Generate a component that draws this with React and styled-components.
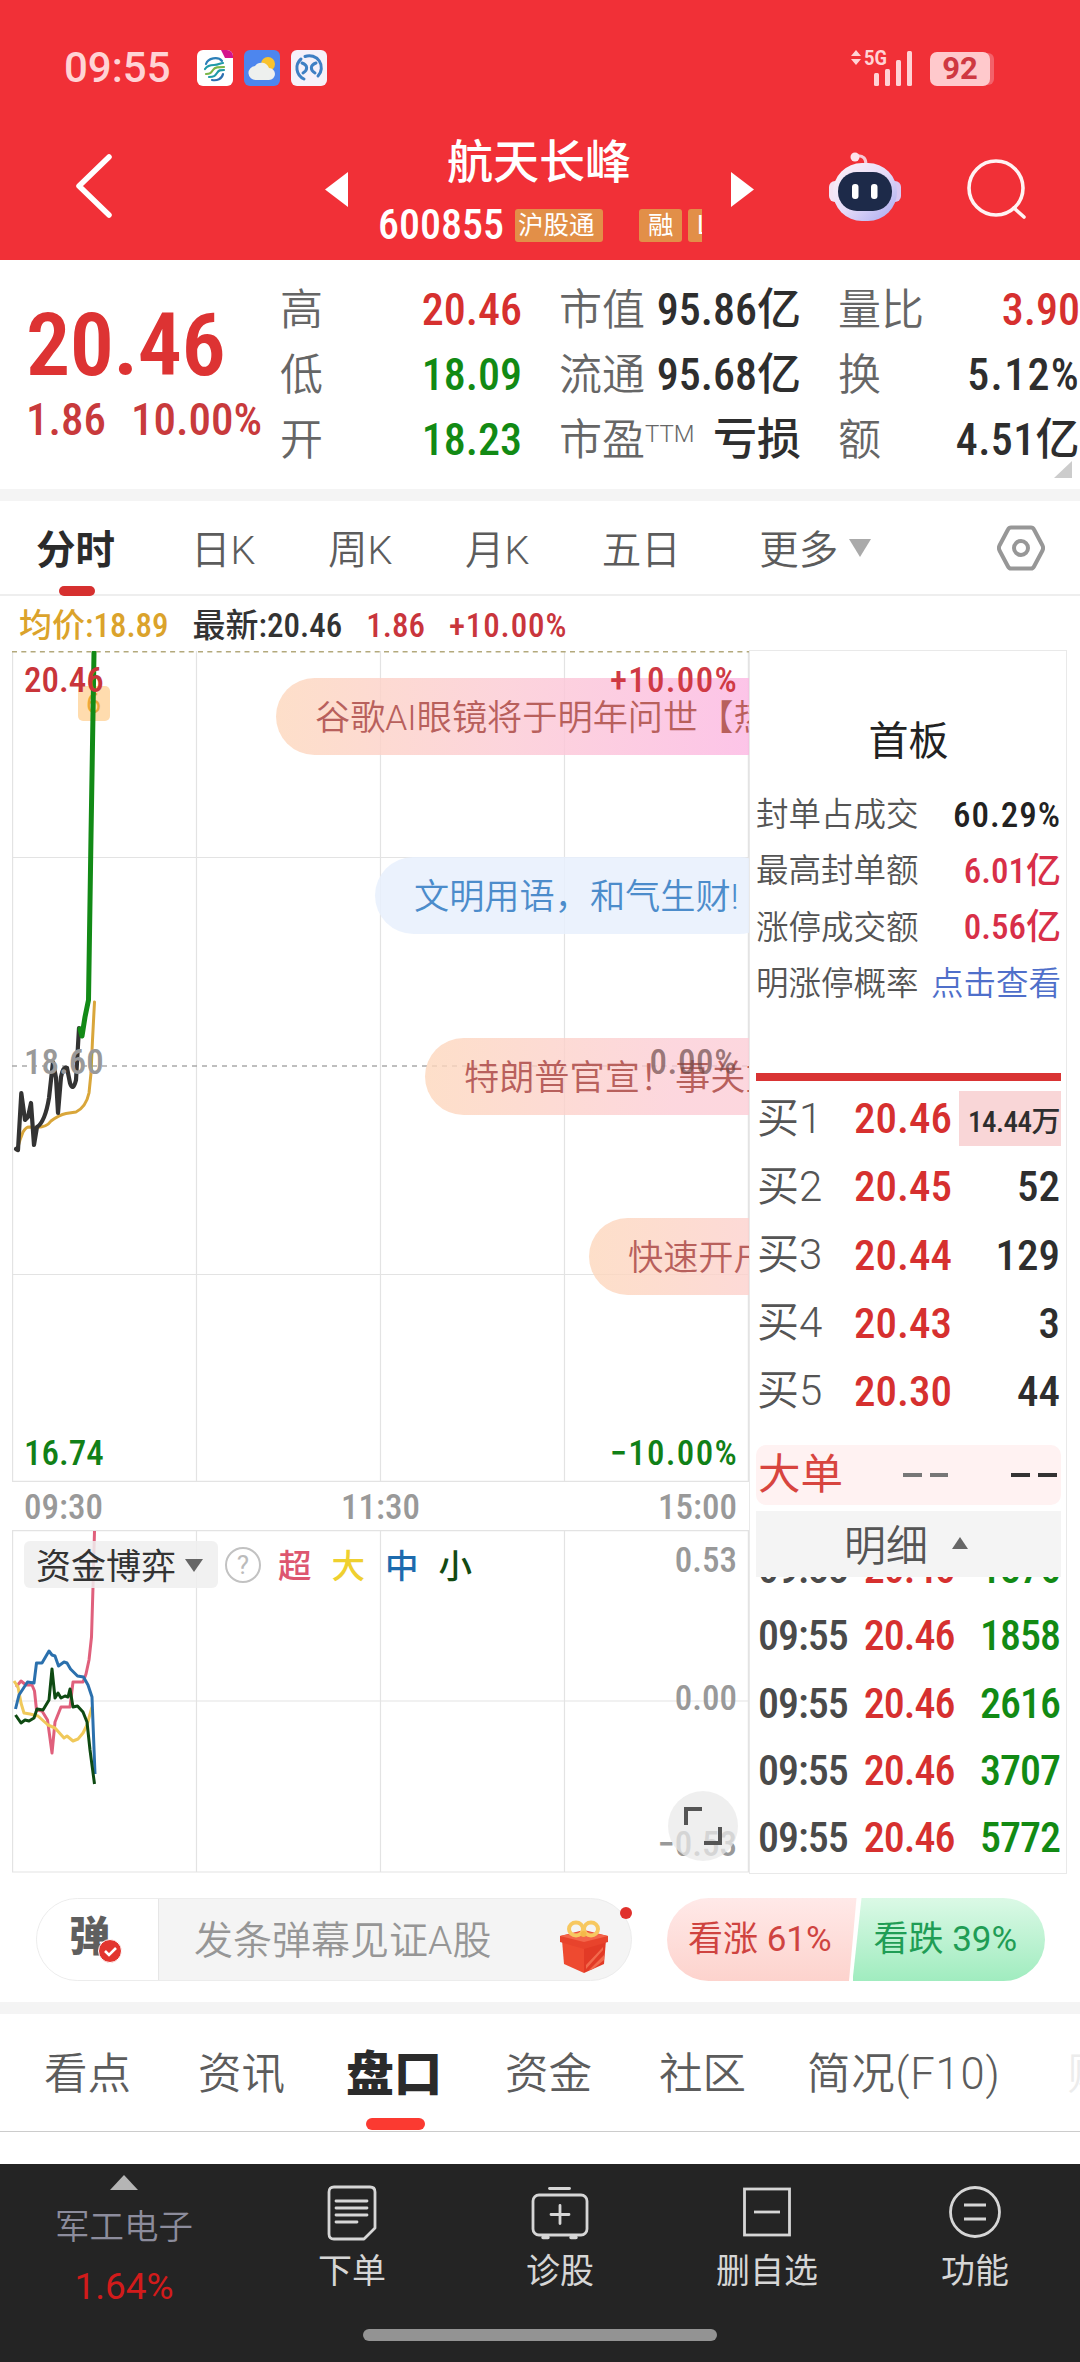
import React from "react";
import styled, { createGlobalStyle } from "styled-components";

const quotes = [
  [
    { label: "高", value: "20.46", tone: "up" },
    { label: "低", value: "18.09", tone: "down" },
    { label: "开", value: "18.23", tone: "down" },
  ],
  [
    { label: "市值", value: "95.86亿" },
    { label: "流通", value: "95.68亿" },
    { label: "市盈", sup: "TTM", value: "亏损" },
  ],
  [
    { label: "量比", value: "3.90", tone: "up" },
    { label: "换", value: "5.12%", space: 1.3 },
    { label: "额", value: "4.51亿", space: 0.4 },
  ],
];

const periods = ["分时", "日K", "周K", "月K", "五日"];

const boardRows = [
  { label: "封单占成交", value: "60.29%", color: "#222", space: 1 },
  { label: "最高封单额", value: "6.01亿", color: "#d82f48" },
  { label: "涨停成交额", value: "0.56亿", color: "#d82f48" },
  { label: "明涨停概率", value: "点击查看", color: "#4f6fca", link: true },
];

const bids = [
  { label: "买1", price: "20.46", volume: "14.44万", hot: true },
  { label: "买2", price: "20.45", volume: "52" },
  { label: "买3", price: "20.44", volume: "129" },
  { label: "买4", price: "20.43", volume: "3" },
  { label: "买5", price: "20.30", volume: "44" },
];

const ticks = ["1876", "1858", "2616", "3707", "5772"];

const bullets = [
  { text: "谷歌AI眼镜将于明年问世【热】", top: 27, left: 264, kind: "pink" },
  { text: "文明用语，和气生财!", top: 206, left: 363, kind: "blue" },
  { text: "特朗普官宣！事关重大", top: 387, left: 413, kind: "warm" },
  { text: "快速开户", top: 567, left: 577, kind: "warm" },
];

const sections = ["看点", "资讯", "盘口", "资金", "社区", "简况(F10)"];

function StatusBar() {
  return (
    <Status>
      <Clock>09:55</Clock>
      <AppIcons>
        <svg width="36" height="36" viewBox="0 0 36 36">
          <rect width="36" height="36" rx="6" fill="#fff" />
          <path d="M24 0h6a6 6 0 0 1 6 6v2H28z" fill="#d4148c" />
          <g fill="none" strokeWidth="2.2" strokeLinecap="round">
            <path d="M9 14c2-6 12-8 16-3" stroke="#2c7fb8" />
            <path d="M8 19c2-3 4-4 9-4s6-2 9-2" stroke="#1f9aa8" />
            <path d="M9 24c4 0 5-1 7-4s5-3 11-3" stroke="#7ab648" />
            <path d="M12 27c5 0 6-1 8-4s3-3 7-3" stroke="#1f9aa8" />
            <path d="M15 30c5 1 10-1 11-6" stroke="#2c6fb0" />
          </g>
        </svg>
        <svg width="36" height="36" viewBox="0 0 36 36">
          <rect width="36" height="36" rx="6" fill="#4d86ee" />
          <circle cx="24" cy="14" r="7" fill="#f9c22e" />
          <path
            d="M12 30a7 7 0 0 1-1-14 8 8 0 0 1 14 2 6 6 0 0 1 0 12z"
            fill="#eef0ee"
          />
        </svg>
        <svg width="36" height="36" viewBox="0 0 36 36">
          <rect width="36" height="36" rx="6" fill="#f6f1fa" />
          <g fill="none" stroke="#3f7fc4" strokeWidth="3" strokeLinecap="round">
            <path d="M13 29A12 12 0 0 1 10 9M14 6.500A12 12 0 0 1 27 26" />
            <path d="M11 13c6 2 6 7 1 10M25 13c-6 2-6 7-1 10" />
          </g>
        </svg>
      </AppIcons>
      <Signal width="62" height="36" viewBox="0 0 62 36">
        <path d="M0 6l5-6 5 6zM0 9h10l-5 6z" />
        <text x="13" y="15" textLength="23" lengthAdjust="spacingAndGlyphs">
          5G
        </text>
        <rect x="23" y="23" width="5" height="13" rx="1.500" />
        <rect x="34" y="19" width="5" height="17" rx="1.500" />
        <rect x="45" y="10" width="5" height="26" rx="1.500" />
        <rect x="56" y="1" width="5" height="35" rx="1.500" />
      </Signal>
      <Battery>92</Battery>
    </Status>
  );
}

function Header() {
  return (
    <HeaderRow>
      <svg width="40" height="66" viewBox="0 0 40 66">
        <path d="M35 4L5 33l30 29" fill="none" stroke="#fff" strokeWidth="5.500" strokeLinecap="round" strokeLinejoin="round" />
      </svg>
      <PrevArrow />
      <StockTitle>
        <StockName>航天长峰</StockName>
        <StockMeta>
          <StockCode>600855</StockCode>
          <Tag $wide>沪股通</Tag>
          <Tag>融</Tag>
          <Tag>L</Tag>
        </StockMeta>
      </StockTitle>
      <NextArrow />
      <RobotIcon width="72" height="70" viewBox="0 0 72 70">
        <defs>
          <linearGradient id="shell" x1="0" y1="0" x2="1" y2="1">
            <stop offset="0" stopColor="#fff3f8" />
            <stop offset="0.500" stopColor="#e6dcf8" />
            <stop offset="1" stopColor="#a6a8f0" />
          </linearGradient>
        </defs>
        <path d="M27 4c8-1 10 3 10 9" fill="none" stroke="#f6c8d4" strokeWidth="3" />
        <circle cx="26" cy="5" r="4.500" fill="#fde2ea" />
        <rect x="0" y="29" width="14" height="21" rx="6" fill="#f3e3f4" />
        <rect x="58" y="29" width="14" height="21" rx="6" fill="#d9c8f3" />
        <rect x="4" y="11" width="64" height="58" rx="29" fill="url(#shell)" />
        <rect x="9" y="20" width="54" height="39" rx="19" fill="#1d2a49" />
        <rect x="23" y="32" width="6.500" height="15" rx="3" fill="#fff" />
        <rect x="42" y="32" width="6.500" height="15" rx="3" fill="#fff" />
      </RobotIcon>
      <svg width="62" height="64" viewBox="0 0 62 64">
        <g fill="none" stroke="#fff3f3" strokeWidth="3.600" strokeLinecap="round">
          <circle cx="30" cy="30" r="27" />
          <path d="M48 50l10 9" />
        </g>
      </svg>
    </HeaderRow>
  );
}

function QuoteSummary() {
  return (
    <Summary>
      <PriceBlock>
        <LastPrice>20.46</LastPrice>
        <Change>
          <span>1.86</span>
          <span>10.00%</span>
        </Change>
      </PriceBlock>
      {quotes.map((column, i) => (
        <QuoteColumn key={i}>
          {column.map((item) => (
            <QuoteRow key={item.label}>
              <QuoteLabel>
                {item.label}
                {item.sup && <Sup>{item.sup}</Sup>}
              </QuoteLabel>
              <QuoteValue $tone={item.tone} $space={item.space}>
                {item.value}
              </QuoteValue>
            </QuoteRow>
          ))}
        </QuoteColumn>
      ))}
      <Corner />
    </Summary>
  );
}

function PeriodTabs() {
  return (
    <Periods>
      {periods.map((name, i) => (
        <Period key={name} $active={i === 0}>
          {name}
        </Period>
      ))}
      <More>
        更多
        <Caret $w={11} $h={18} $color="#aaa" $down />
      </More>
      <svg width="48" height="46" viewBox="0 0 48 46">
        <g fill="none" stroke="#979797" strokeWidth="4" strokeLinejoin="round">
          <path d="M14 2.500h20q2 0 3 2l8.500 16q1.200 2.500 0 5l-8.500 16q-1 2-3 2H14q-2 0-3-2L2.500 25.500q-1.200-2.500 0-5L11 4.500q1-2 3-2z" />
          <circle cx="24" cy="23" r="7" />
        </g>
      </svg>
    </Periods>
  );
}

function PriceChart() {
  return (
    <PricePlot>
      <Drawing width="737" height="831" viewBox="12 651 737 831">
        <g stroke="#e3e3e3" strokeWidth="1.200" fill="none">
          <path d="M12.600 651v831M196.500 651v831M380.500 651v831M564.500 651v831M748.400 651v831" />
          <path d="M12 857.500h737M12 1274.500h737M12 1481.400h737" />
        </g>
        <path d="M12 651.700h737" stroke="#b3a97c" strokeWidth="1.500" strokeDasharray="5 4.300" />
        <path d="M12 1066h737" stroke="#aaa" strokeWidth="1.500" strokeDasharray="5 5" />
        <rect x="78" y="686" width="32" height="35" rx="5" fill="#ffdcae" />
        <text x="86" y="713" fontSize="27" fill="#eda63a">6</text>
        <g fill="none" strokeLinecap="round" strokeLinejoin="round">
          <path
            d="M17 1150L20 1140L23 1132Q26 1127 29 1127L37 1127.500Q47 1127 51 1121Q59 1115 66 1113.500L76 1112Q86 1107 89 1093L91 1073L92.500 1040L94.500 1002"
            stroke="#d9a63a"
            strokeWidth="3"
          />
          <path
            d="M16 1149L18 1150L21.300 1093L25 1120L28 1117L31 1103L34 1145L37 1127Q45 1122 49 1098L53 1062L56 1078L58 1113L61 1077Q63 1066 67 1068L70 1083Q73 1092 76 1080L79 1028"
            stroke="#333"
            strokeWidth="4.200"
          />
          <path d="M80 1029L82 1036L85 1017L88.500 1000L91 836L94 653" stroke="#128a16" strokeWidth="5" />
        </g>
      </Drawing>
      {bullets.map((b) => (
        <Bullet key={b.text} $top={b.top} $left={b.left} $kind={b.kind}>
          {b.text}
        </Bullet>
      ))}
      <AxisLabel $top={12} $left={12} $color="#c9353a">20.46</AxisLabel>
      <AxisLabel $top={12} $right={11} $space={1.3} $color="#cf3a44">+10.00%</AxisLabel>
      <AxisLabel $top={394} $left={12} $color="#999">18.60</AxisLabel>
      <AxisLabel $top={394} $right={12} $space={0.6} $color="rgba(110, 75, 75, 0.700)">0.00%</AxisLabel>
      <AxisLabel $top={785} $left={12} $color="#118017">16.74</AxisLabel>
      <AxisLabel $top={785} $right={11} $space={1.3} $color="#118017">−10.00%</AxisLabel>
    </PricePlot>
  );
}

function FundChart() {
  return (
    <FundPlot>
      <Drawing width="737" height="344" viewBox="12 1530 737 344">
        <g stroke="#e3e3e3" strokeWidth="1.200" fill="none">
          <path d="M12.600 1530v342M196.500 1530v342M380.500 1530v342M564.500 1530v342M748.400 1530v342" />
          <path d="M12 1530.700h737M12 1701h737M12 1872h737" />
        </g>
        <g fill="none" strokeWidth="3" strokeLinejoin="round">
          <path d="M16 1687L21 1681L26 1685L32 1685L34.500 1691L36.500 1710L42 1711L47.500 1720L52 1753L55 1722L61 1707L70 1707L73 1682L83 1682L86 1674L89 1660L91.500 1637L93 1587L94.500 1531" stroke="#e0607c" />
          <path d="M14 1681L18 1687L21 1703L24 1713L30 1714L38 1716L48 1725L55 1728L64 1738L67 1736L73 1741L78 1739L83 1733L87 1725L92 1707" stroke="#f0c95a" />
          <path d="M15.500 1709L19 1695L27.500 1682L34 1683L36.500 1663L42 1663L49 1651L52 1655L55 1656L58.500 1666L64 1662L67 1663L70.500 1669L77.500 1676L83.500 1677L88 1685L92 1697L93 1723L95 1774" stroke="#2b70ad" />
          <path d="M15.500 1715L21 1723L25 1720L29 1721L34 1718L37 1709L43 1710L49 1700L52 1669L55 1698L58 1693L61 1698L65 1696L68 1697L70 1689L73 1707L77.500 1706L83 1712L87 1722L90 1750L94.500 1784" stroke="#0e4a12" />
        </g>
      </Drawing>
      <Legend>
        <FundSelect>
          资金博弈
          <Caret $w={9} $h={13} $color="#666" $down />
        </FundSelect>
        <Help>?</Help>
        <LegendKey $color="#dd5670">超</LegendKey>
        <LegendKey $color="#efd02f">大</LegendKey>
        <LegendKey $color="#1d6bae">中</LegendKey>
        <LegendKey $color="#134a12">小</LegendKey>
      </Legend>
      <AxisLabel $top={13} $right={12} $color="#999">0.53</AxisLabel>
      <AxisLabel $top={151} $right={12} $color="#999">0.00</AxisLabel>
      <AxisLabel $top={297} $right={12} $color="#999">−0.53</AxisLabel>
      <Expand>
        <svg width="38" height="38" viewBox="0 0 38 38">
          <g fill="none" stroke="#555" strokeWidth="4">
            <path d="M2 18V2h16M36 20v16H20" />
          </g>
        </svg>
      </Expand>
    </FundPlot>
  );
}

function OrderPanel() {
  return (
    <Panel>
      <BoardTitle>首板</BoardTitle>
      {boardRows.map((row) => (
        <BoardRow key={row.label}>
          <span>{row.label}</span>
          <BoardValue $color={row.color} $link={row.link} $space={row.space}>
            {row.value}
          </BoardValue>
        </BoardRow>
      ))}
      <RedBar />
      {bids.map((bid) => (
        <BidRow key={bid.label}>
          <BidLabel>{bid.label}</BidLabel>
          <BidPrice>{bid.price}</BidPrice>
          <BidVolume $hot={bid.hot}>{bid.volume}</BidVolume>
        </BidRow>
      ))}
      <BigOrder>
        <BigLabel>大单</BigLabel>
        <Dashes $color="#777" />
        <Dashes $color="#333" />
      </BigOrder>
      <DetailBar>
        明细
        <Caret $w={8.5} $h={12} $color="#666" />
      </DetailBar>
      <TickList>
        {ticks.map((volume) => (
          <TickRow key={volume}>
            <span>09:55</span>
            <TickPrice>20.46</TickPrice>
            <TickVolume>{volume}</TickVolume>
          </TickRow>
        ))}
      </TickList>
    </Panel>
  );
}

function BulletBar() {
  return (
    <Interact>
      <InputPill>
        <BulletToggle>
          <ToggleGlyph>弹</ToggleGlyph>
          <CheckBadge width="24" height="24" viewBox="0 0 24 24">
            <circle cx="12" cy="12" r="11.500" fill="#e2352f" stroke="#fff" />
            <path d="M7 12l4 4 7-7" fill="none" stroke="#fff" strokeWidth="2.600" />
          </CheckBadge>
        </BulletToggle>
        <Placeholder>发条弹幕见证A股</Placeholder>
        <svg width="50" height="54" viewBox="0 0 50 54">
          <path d="M3 20l22 7v26L5 44z" fill="#ee4a30" />
          <path d="M47 20l-22 7v26l20-9z" fill="#e23a26" />
          <path d="M30 50l15-15v5L34 49zM27 45l17-18v3L27 49z" fill="#f2694c" />
          <path d="M1 16l24-6 24 6v6l-24 7-24-7z" fill="#e8432c" />
          <path d="M1 16l24 6 24-6-24-5z" fill="#f4654a" />
          <g fill="none" stroke="#f7c860" strokeWidth="4">
            <ellipse cx="17" cy="9" rx="7" ry="6.500" />
            <ellipse cx="32" cy="9" rx="7" ry="6.500" />
          </g>
          <circle cx="24.500" cy="14" r="3" fill="#f5b94a" />
        </svg>
        <RedDot />
      </InputPill>
      <Poll>
        <Bull>看涨 61%</Bull>
        <Bear>看跌 39%</Bear>
      </Poll>
    </Interact>
  );
}

function BottomBar() {
  return (
    <Bottom>
      <Sector>
        <Caret $w={14} $h={15} $color="#b5b5b5" />
        <SectorName>军工电子</SectorName>
        <SectorChange>1.64%</SectorChange>
      </Sector>
      <Action>
        <svg width="50" height="56" viewBox="0 0 50 56">
          <g fill="none" stroke="#d6d6d6" strokeWidth="2.800" strokeLinecap="round" strokeLinejoin="round">
            <path d="M7 2h36q5 0 5 5v36L37 54H7q-5 0-5-5V7q0-5 5-5z" />
            <path d="M9 16h31M9 23h31M9 30h31M9 37h21" />
          </g>
        </svg>
        下单
      </Action>
      <Action>
        <svg width="58" height="56" viewBox="0 0 58 56">
          <g fill="none" stroke="#d6d6d6" strokeWidth="2.800" strokeLinecap="round">
            <path d="M18.500 3.500h20" />
            <rect x="2" y="10" width="54" height="40" rx="6" />
            <path d="M29 20.500v18M20 29.500h18" />
            <path d="M12 52.500h5M40 52.500h5" strokeWidth="3.500" />
          </g>
        </svg>
        诊股
      </Action>
      <Action>
        <svg width="50" height="56" viewBox="0 0 50 56">
          <g fill="none" stroke="#d6d6d6" strokeWidth="2.800">
            <rect x="2.500" y="4" width="45" height="46" />
            <path d="M12 27h26" />
          </g>
        </svg>
        删自选
      </Action>
      <Action>
        <svg width="54" height="56" viewBox="0 0 54 56">
          <g fill="none" stroke="#d6d6d6" strokeWidth="2.800">
            <circle cx="27" cy="27" r="24.500" />
            <path d="M16 20h22M16 34h22" />
          </g>
        </svg>
        功能
      </Action>
      <HomePill />
    </Bottom>
  );
}

function App() {
  return (
    <Screen>
      <GlobalStyle />
      <RedHead>
        <StatusBar />
        <Header />
      </RedHead>
      <QuoteSummary />
      <Band />
      <PeriodTabs />
      <InfoLine>
        <Info $color="#dba32b">均价:18.89</Info>
        <Info $color="#333">最新:20.46</Info>
        <Info $color="#c9353c">1.86</Info>
        <Info $color="#c9353c" $space={0.9}>+10.00%</Info>
      </InfoLine>
      <Main>
        <Charts>
          <PriceChart />
          <TimeAxis>
            <span>09:30</span>
            <span>11:30</span>
            <span>15:00</span>
          </TimeAxis>
          <FundChart />
        </Charts>
        <OrderPanel />
      </Main>
      <BulletBar />
      <Band />
      <SectionTabs>
        {sections.map((name) => (
          <Section key={name} $active={name === "盘口"}>
            {name}
          </Section>
        ))}
        <FadedSection>财务</FadedSection>
      </SectionTabs>
      <BottomBar />
    </Screen>
  );
}

const up = "#d6302f";
const down = "#128a14";

const GlobalStyle = createGlobalStyle`
  * {
    box-sizing: border-box;
  }
  body {
    margin: 0;
    background: #fff;
    font-family: Roboto, "Noto Sans CJK SC", sans-serif;
    line-height: 1;
  }
  svg {
    display: block;
    flex: none;
  }
`;

const Screen = styled.div`
  width: 1080px;
  height: 2362px;
  overflow: hidden;
  display: flex;
  flex-direction: column;
  color: #333;
  white-space: nowrap;
  > * {
    flex: none;
  }
`;

const Caret = styled.i`
  width: 0;
  height: 0;
  border-left: ${(props) => props.$w}px solid transparent;
  border-right: ${(props) => props.$w}px solid transparent;
  ${(props) => (props.$down ? "border-top" : "border-bottom")}: ${(props) =>
    props.$h}px solid ${(props) => props.$color};
`;

/* narrow digits used by every price and volume */
const Num = styled.span`
  font-weight: 500;
  font-stretch: 85%;
  letter-spacing: ${(props) => props.$space || 0}px;
`;

const RedHead = styled.header`
  height: 260px;
  background: #f13037;
  color: #fff;
`;

const Status = styled.div`
  height: 120px;
  padding: 50px 90px 0 64px;
  display: flex;
  align-items: flex-start;
`;

const Clock = styled.div`
  width: 133px;
  line-height: 35px;
  font-size: 42px;
  font-weight: 500;
  color: #ffd3d5;
`;

const AppIcons = styled.div`
  display: flex;
  gap: 11px;
`;

const Signal = styled.svg`
  margin-left: auto;
  fill: #ffd3d5;
  font: 700 21px Roboto;
`;

const Battery = styled.div`
  width: 60px;
  height: 34px;
  margin: 2px 0 0 17px;
  border-radius: 7px;
  background: #ffc9cc;
  color: #cf3841;
  font: 700 31px/34px Roboto;
  text-align: center;
  box-shadow: 5px 0 0 -1px #f2626a;
`;

const HeaderRow = styled.div`
  height: 140px;
  padding: 0 52px 0 74px;
  display: flex;
  > svg:first-child {
    margin-top: 33px;
  }
  > svg:last-child {
    margin: 38px 0 0 auto;
  }
`;

const PrevArrow = styled.div`
  margin: 52px 0 0 211px;
  width: 23px;
  height: 35px;
  background: #fff;
  clip-path: polygon(100% 0, 100% 100%, 0 50%);
`;

const NextArrow = styled(PrevArrow)`
  margin-left: 29px;
  clip-path: polygon(0 0, 0 100%, 100% 50%);
`;

const StockTitle = styled.div`
  width: 323px;
  margin-left: 31px;
  padding-top: 19px;
  overflow: hidden;
`;

const StockName = styled.div`
  margin-left: -3px;
  font-size: 46px;
  font-weight: 500;
  text-align: center;
  line-height: 46px;
`;

const StockMeta = styled.div`
  display: flex;
  align-items: center;
  margin-top: 23px;
  height: 34px;
`;

const StockCode = styled(Num)`
  width: 137px;
  margin-left: -1px;
  flex: none;
  font-size: 42px;
`;

const Tag = styled.div`
  flex: none;
  width: ${(props) => (props.$wide ? "88px" : "43px")};
  margin-right: ${(props) => (props.$wide ? "36px" : "6px")};
  padding-left: ${(props) => (props.$wide ? "3px" : "9px")};
  border-radius: 3px;
  background: #e28f48;
  font-size: 25.5px;
  line-height: 33px;
`;

const RobotIcon = styled.svg`
  margin: 32px 0 0 75px;
`;

const Summary = styled.section`
  position: relative;
  height: 229px;
  padding: 17px 0 0 26px;
  display: flex;
`;

const PriceBlock = styled.div`
  width: 254px;
  color: ${up};
`;

const LastPrice = styled(Num)`
  display: block;
  margin-top: 24px;
  font-size: 88px;
  font-weight: 600;
  letter-spacing: -0.6px;
  color: #dd3333;
`;

const Change = styled(Num)`
  display: flex;
  gap: 25px;
  margin-top: 8px;
  font-size: 45px;
  color: #c83a3c;
`;

const QuoteColumn = styled.div`
  width: 242px;
  margin-right: 37px;
  &:last-of-type {
    margin-right: 0;
  }
`;

const QuoteRow = styled.div`
  height: 65px;
  display: flex;
  align-items: center;
  justify-content: space-between;
`;

const QuoteLabel = styled.span`
  display: flex;
  padding-top: 2px;
  font-size: 43px;
  font-weight: 350;
  color: #666;
`;

const Sup = styled.span`
  font-size: 24px;
  margin-top: 3px;
`;

const QuoteValue = styled(Num)`
  font-size: 44px;
  color: ${(props) =>
    props.$tone === "up" ? up : props.$tone === "down" ? down : "#2e2e2e"};
`;

const Corner = styled.i`
  position: absolute;
  right: 8px;
  top: 201px;
  width: 18px;
  height: 17px;
  background: #ccc;
  clip-path: polygon(100% 0, 100% 100%, 0 100%);
`;

const Band = styled.div`
  height: 12px;
  background: #f4f4f4;
`;

const Periods = styled.nav`
  height: 95px;
  padding: 0 35px 0 36px;
  display: flex;
  align-items: center;
  border-bottom: 2px solid #eee;
  > svg {
    margin: 0 0 0 auto;
  }
`;

const Period = styled.div`
  position: relative;
  height: 93px;
  margin-right: ${(props) => (props.$active ? 76 : 72.5)}px;
  font-size: 39.5px;
  line-height: 100px;
  font-weight: ${(props) => (props.$active ? 700 : 350)};
  color: ${(props) => (props.$active ? "#2b2b2b" : "#5c5c5c")};
  &::after {
    content: "";
    display: ${(props) => (props.$active ? "block" : "none")};
    position: absolute;
    left: 23px;
    bottom: -2px;
    width: 36px;
    height: 10px;
    border-radius: 5px;
    background: ${up};
  }
`;

const More = styled.div`
  display: flex;
  align-items: center;
  gap: 11px;
  margin-left: 6px;
  padding-top: 6px;
  font-size: 39.5px;
  font-weight: 350;
  color: #5c5c5c;
  > i {
    margin-top: -6px;
  }
`;

const InfoLine = styled.div`
  height: 54px;
  padding: 5px 0 0 19px;
  display: flex;
  align-items: center;
  gap: 24px;
`;

const Info = styled(Num)`
  font-size: 33px;
  color: ${(props) => props.$color};
`;

const Main = styled.main`
  display: flex;
  height: 1224px;
  padding-left: 12px;
`;

const Charts = styled.div`
  width: 737px;
  padding-top: 1px;
`;

const PricePlot = styled.div`
  position: relative;
  height: 831px;
  overflow: hidden;
`;

const Drawing = styled.svg`
  font-family: Roboto, sans-serif;
`;

const bulletFill = {
  pink: "linear-gradient(90deg, rgba(253,215,188,.8) 0, rgba(252,205,214,.85) 230px, rgba(252,182,226,.8) 473px)",
  warm: "linear-gradient(90deg, rgba(253,215,188,.8) 0, rgba(252,205,214,.8) 250px)",
  blue: "rgba(232, 240, 253, 0.85)",
};

const Bullet = styled.div`
  position: absolute;
  top: ${(props) => props.$top}px;
  left: ${(props) => props.$left}px;
  height: 77px;
  padding: 0 39px;
  border-radius: 39px;
  background: ${(props) => bulletFill[props.$kind]};
  color: ${(props) => (props.$kind === "blue" ? "#4c8ccb" : "#b8605c")};
  font-size: 35.2px;
  font-weight: 350;
  line-height: 81px;
`;

const AxisLabel = styled(Num)`
  position: absolute;
  top: ${(props) => props.$top}px;
  left: ${(props) => (props.$left ? props.$left + "px" : "auto")};
  right: ${(props) => (props.$right ? props.$right + "px" : "auto")};
  font-size: 35px;
  color: ${(props) => props.$color};
`;

const TimeAxis = styled(Num)`
  display: flex;
  justify-content: space-between;
  align-items: center;
  height: 48px;
  padding: 3px 12px 0;
  font-size: 35px;
  color: #999;
`;

const FundPlot = styled.div`
  position: relative;
  height: 344px;
`;

const Legend = styled.div`
  position: absolute;
  top: 11px;
  left: 12px;
  display: flex;
  align-items: center;
`;

const FundSelect = styled.div`
  display: flex;
  align-items: center;
  gap: 9px;
  width: 194px;
  height: 47px;
  padding: 6px 0 0 12px;
  border-radius: 6px;
  background: rgba(238, 238, 238, 0.85);
  font-size: 35px;
  > i {
    margin-top: -4px;
  }
`;

const Help = styled.div`
  width: 36px;
  height: 36px;
  margin: 0 17px 0 7px;
  border: 2.5px solid #c2c2c2;
  border-radius: 50%;
  color: #bbb;
  font-size: 26px;
  line-height: 32px;
  text-align: center;
`;

const LegendKey = styled.span`
  margin: 5px 20px 0 0;
  font-size: 33.5px;
  font-weight: 500;
  color: ${(props) => props.$color};
`;

const Expand = styled.div`
  position: absolute;
  right: 11px;
  top: 261px;
  width: 70px;
  height: 70px;
  border-radius: 50%;
  background: rgba(233, 233, 233, 0.75);
  display: flex;
  align-items: center;
  justify-content: center;
`;

const Panel = styled.aside`
  width: 318px;
  height: 1224px;
  padding: 0 5px 0 6px;
  border: 1px solid #e9e9e9;
  display: flex;
  flex-direction: column;
  overflow: hidden;
  > * {
    flex: none;
  }
`;

const BoardTitle = styled.div`
  margin: 71px 0 25px;
  font-size: 40px;
  line-height: 40px;
  text-align: center;
  color: #222;
`;

const BoardRow = styled.div`
  height: 56.4px;
  display: flex;
  align-items: center;
  justify-content: space-between;
  font-size: 32.5px;
  font-weight: 350;
  color: #555;
`;

const BoardValue = styled(Num)`
  font-size: ${(props) => (props.$link ? 32.5 : 35)}px;
  font-weight: ${(props) => (props.$link ? 350 : 500)};
  color: ${(props) => props.$color};
`;

const RedBar = styled.div`
  height: 8px;
  margin: 60px 0 4px;
  background: #d93434;
`;

const BidRow = styled.div`
  height: 68.2px;
  display: flex;
  align-items: center;
  padding-left: 1px;
`;

const BidLabel = styled.span`
  width: 97px;
  font-size: 42px;
  font-weight: 350;
  color: #555;
`;

const BidPrice = styled(Num)`
  width: 105px;
  font-size: 43px;
  color: ${up};
`;

const BidVolume = styled(Num)`
  flex: 1;
  padding-right: 1px;
  text-align: right;
  font-size: ${(props) => (props.$hot ? 29 : 43)}px;
  line-height: ${(props) => (props.$hot ? "63px" : "1")};
  height: ${(props) => (props.$hot ? "55px" : "auto")};
  letter-spacing: ${(props) => (props.$hot ? "-0.5px" : "0")};
  background: ${(props) => (props.$hot ? "#f9d6d7" : "none")};
  color: #2e2e2e;
`;

const BigOrder = styled.div`
  display: flex;
  align-items: center;
  height: 60px;
  margin: 19px 0 6px;
  padding: 0 4px 0 2px;
  border-radius: 10px;
  background: #fff2f2;
`;

const BigLabel = styled.span`
  width: 146px;
  padding-top: 2px;
  font-size: 42.5px;
  font-weight: 400;
  color: #d8453f;
`;

const Dashes = styled.i`
  width: 46px;
  height: 4px;
  margin-right: 63px;
  background: linear-gradient(
    90deg,
    ${(props) => props.$color} 19px,
    transparent 19px 27px,
    ${(props) => props.$color} 27px
  );
  &:last-child {
    margin-right: 0;
  }
`;

const DetailBar = styled.div`
  display: flex;
  align-items: center;
  gap: 24px;
  height: 66px;
  padding: 6px 0 0 88px;
  background: #f4f4f4;
  font-size: 42px;
  font-weight: 350;
  color: #555;
  > i {
    margin-top: -8px;
  }
`;

const TickList = styled.div`
  flex: 1;
  overflow: hidden;
  display: flex;
  flex-direction: column;
  justify-content: flex-end;
  padding-bottom: 1px;
`;

const TickRow = styled(Num)`
  flex: none;
  height: 67.4px;
  display: flex;
  align-items: center;
  padding: 0 1px 0 2px;
  font-size: 42px;
  letter-spacing: -1px;
  color: #4a4a4a;
`;

const TickPrice = styled.span`
  margin-left: 16px;
  color: ${up};
`;

const TickVolume = styled.span`
  margin-left: auto;
  color: ${down};
`;

const Interact = styled.div`
  height: 128px;
  padding: 24px 35px 0 36px;
  display: flex;
  justify-content: space-between;
`;

const InputPill = styled.div`
  position: relative;
  width: 596px;
  height: 83px;
  display: flex;
  align-items: center;
  border: 1px solid #ececec;
  border-radius: 42px;
  background: #f4f4f4;
`;

const BulletToggle = styled.div`
  position: relative;
  width: 122px;
  height: 81px;
  padding: 18px 0 0 32px;
  border-right: 1px solid #e6e6e6;
  border-radius: 41px 0 0 41px;
  background: #fff;
`;

const ToggleGlyph = styled.span`
  font-size: 41px;
  font-weight: 900;
  color: #5f5f5f;
`;

const CheckBadge = styled.svg`
  position: absolute;
  left: 61px;
  top: 40px;
`;

const Placeholder = styled.span`
  width: 364px;
  padding: 3px 0 0 35px;
  font-size: 39px;
  font-weight: 350;
  color: #969696;
  & + svg {
    margin: 14px 0 0 36px;
  }
`;

const RedDot = styled.i`
  position: absolute;
  right: -1px;
  top: 8px;
  width: 12px;
  height: 12px;
  border-radius: 50%;
  background: #e0312c;
`;

const Poll = styled.div`
  width: 378px;
  height: 83px;
  display: flex;
  border-radius: 42px;
  overflow: hidden;
  font-size: 35px;
  line-height: 83px;
`;

const Bull = styled.div`
  width: 190px;
  padding-left: 21px;
  background: linear-gradient(#ffe9e8, #fdd3cd);
  clip-path: polygon(0 0, 100% 0, 182px 100%, 0 100%);
  color: #cf4340;
`;

const Bear = styled.div`
  width: 193px;
  margin-left: -4px;
  padding-left: 21px;
  background: linear-gradient(#dbf9e6, #a0ecbf);
  clip-path: polygon(9px 0, 100% 0, 100% 100%, 0 100%);
  color: #1f9d55;
`;

const SectionTabs = styled.nav`
  height: 118px;
  padding-left: 44px;
  display: flex;
  align-items: center;
  border-bottom: 1px solid #ccc;
`;

const Section = styled.div`
  position: relative;
  height: 117px;
  margin-right: ${(props) => (props.$active ? 63 : 67)}px;
  ${(props) => props.$active && "margin-left: -6px;"}
  font-size: ${(props) => (props.$active ? 48 : 43.5)}px;
  line-height: 121px;
  font-weight: ${(props) => (props.$active ? 900 : 350)};
  color: ${(props) => (props.$active ? "#2b2b2b" : "#5c5c5c")};
  &:nth-last-child(2) {
    margin-left: -6px;
    letter-spacing: 0.8px;
  }
  &::after {
    content: "";
    display: ${(props) => (props.$active ? "block" : "none")};
    position: absolute;
    left: 20px;
    bottom: 1px;
    width: 59px;
    height: 12px;
    border-radius: 6px;
    background: #fb3a31;
  }
`;

const FadedSection = styled(Section)`
  margin-right: 0;
  color: #ececec;
`;

const Bottom = styled.footer`
  position: relative;
  height: 198px;
  margin-top: 32px;
  display: grid;
  grid-template-columns: 248px 208px 208px 206px 210px;
  background: #242424;
  color: #d6d6d6;
`;

const Sector = styled.div`
  display: flex;
  flex-direction: column;
  align-items: center;
  padding: 11px 0 0 0;
`;

const SectorName = styled.span`
  margin-top: 20px;
  font-size: 34.5px;
  font-weight: 350;
  color: #8c8c9c;
`;

const SectorChange = styled.span`
  margin-top: 23px;
  font-size: 37px;
  color: #d21b1b;
`;

const Action = styled.div`
  display: flex;
  flex-direction: column;
  align-items: center;
  gap: 13px;
  padding-top: 21px;
  font-size: 34px;
`;

const HomePill = styled.i`
  position: absolute;
  left: 363px;
  bottom: 21px;
  width: 354px;
  height: 12px;
  border-radius: 6px;
  background: #939393;
`;

export default App;
